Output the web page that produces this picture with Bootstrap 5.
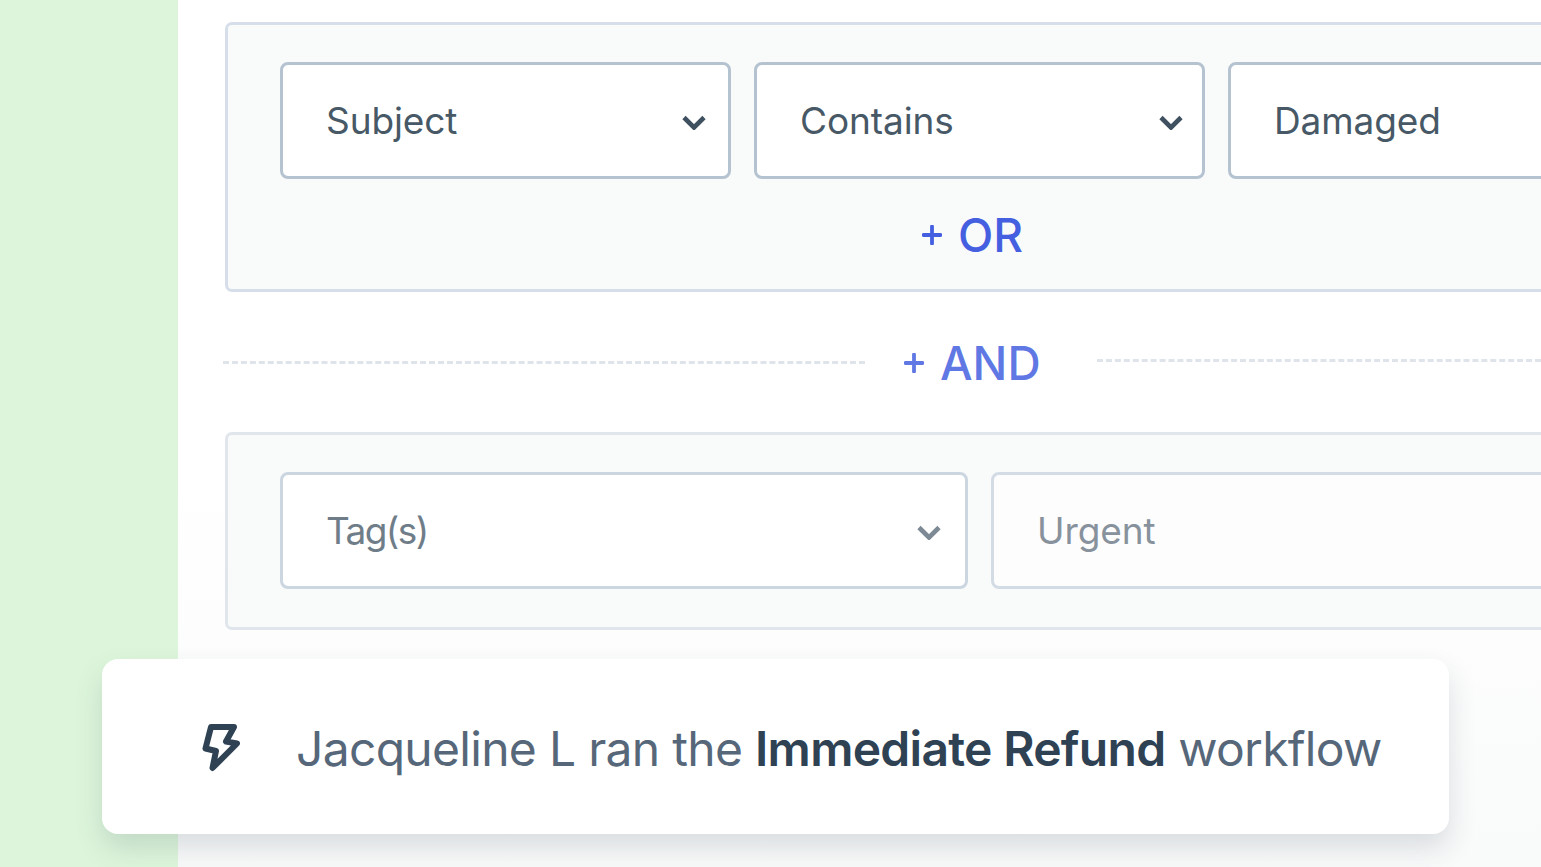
<!doctype html>
<html lang="en">
<head>
<meta charset="utf-8">
<title>Workflow</title>
<link href="https://cdn.jsdelivr.net/npm/bootstrap@5.3.0/dist/css/bootstrap.min.css" rel="stylesheet">
<style>
html,body{height:867px;overflow:hidden;background:#fff;font-family:Inter,"Liberation Sans",sans-serif}
.stage{height:867px;width:1541px;position:relative;overflow:hidden}
.side-strip{width:178px;flex:none;background:#ddf6db}
.work{width:1800px;flex:none;padding:22px 0 0 47px;background:linear-gradient(180deg,#fff 0,#fff 55%,#f9fafa 100%)}
.rule-box{background:#f9fafa;border:3px solid #d6dfe9;border-radius:7px;padding:37px 52px 0}
.rule-a{height:270px}
.rule-b{height:198px;border-color:#e1e6ed;margin-top:140px}
.fld{height:117px;border:3px solid #b5c3d1;border-radius:8px;background:#fff;padding:0 22px 0 43px;font-size:37px;letter-spacing:-.1px;color:#475866;flex:none}
.fld svg{flex:none;margin-top:3px}
.w-s{width:451px}
.w-s-b{padding-right:19px}
.gap-f{gap:23px}
.w-wide{width:688px;padding-right:24px}
.w-rest{width:700px}
.faded{border-color:#ccd6e0;color:#6f7d89}
.tag-word{letter-spacing:-1.6px}
.faded-2{border-color:#d3dce5;color:#87929c;background:#fdfdfe}
.add-link{font-size:46px;font-weight:500;line-height:56px;color:#4460e0}
.add-or{margin:28px 0 0 642px}
.add-and{color:#5f78e4}
.and-row{position:absolute;left:223px;top:335px;width:1318px}
.dash-l{width:642px;height:0;border-top:3px dashed #dfe4ea;margin:0 39px 2px 0}
.dash-r{flex:1;height:0;border-top:3px dashed #dfe4ea;margin:0 0 6px 56px}
.toast-card{position:absolute;left:102px;top:659px;width:1347px;height:175px;background:#fff;border-radius:16px;box-shadow:0 14px 28px rgba(50,70,90,.16);padding-left:100px;gap:56px;font-size:48px;letter-spacing:-.7px;color:#56677a;white-space:nowrap}
.toast-text{padding-top:4px}
.toast-card b{font-weight:600;color:#2f4254}
</style>
</head>
<body>
<div class="stage d-flex">
  <div class="side-strip"></div>
  <div class="work">
    <div class="rule-box rule-a">
      <div class="d-flex gap-f">
        <div class="fld w-s d-flex align-items-center justify-content-between">
          <span>Subject</span>
          <svg width="24" height="16" viewBox="0 0 24 16"><path d="M2 3.500l10 10 10-10" fill="none" stroke="#3f5060" stroke-width="4.600"/></svg>
        </div>
        <div class="fld w-s w-s-b d-flex align-items-center justify-content-between">
          <span>Contains</span>
          <svg width="24" height="16" viewBox="0 0 24 16"><path d="M2 3.500l10 10 10-10" fill="none" stroke="#3f5060" stroke-width="4.600"/></svg>
        </div>
        <div class="fld w-rest d-flex align-items-center"><span>Damaged</span></div>
      </div>
      <div class="add-link add-or d-flex align-items-center gap-3">
        <svg width="20" height="20" viewBox="0 0 20 20"><path d="M10 1.500v17M1.500 10h17" stroke="#4460e0" stroke-width="3.800" stroke-linecap="round"/></svg>
        <span>OR</span>
      </div>
    </div>
    <div class="rule-box rule-b">
      <div class="d-flex gap-f">
        <div class="fld w-wide faded d-flex align-items-center justify-content-between">
          <span class="tag-word">Tag(s)</span>
          <svg width="24" height="16" viewBox="0 0 24 16"><path d="M2 3.500l10 10 10-10" fill="none" stroke="#7d8a95" stroke-width="4.600"/></svg>
        </div>
        <div class="fld w-rest faded-2 d-flex align-items-center"><span>Urgent</span></div>
      </div>
    </div>
  </div>
  <div class="and-row d-flex align-items-center">
    <div class="dash-l"></div>
    <div class="add-link add-and d-flex align-items-center gap-3">
      <svg width="20" height="20" viewBox="0 0 20 20"><path d="M10 1.500v17M1.500 10h17" stroke="#5f78e4" stroke-width="3.800" stroke-linecap="round"/></svg>
      <span>AND</span>
    </div>
    <div class="dash-r"></div>
  </div>
  <div class="toast-card d-flex align-items-center">
    <svg width="38" height="50" viewBox="0 0 38 50" class="flex-none"><path d="M9 5H32L24 19.500L35 21.500L10.500 46L14 29L3.500 26.500Z" fill="none" stroke="#2f4254" stroke-width="6" stroke-linejoin="round"/></svg>
    <span class="toast-text">Jacqueline L ran the <b>Immediate Refund</b> workflow</span>
  </div>
</div>
<script src="https://cdn.jsdelivr.net/npm/bootstrap@5.3.0/dist/js/bootstrap.bundle.min.js"></script>
</body>
</html>
